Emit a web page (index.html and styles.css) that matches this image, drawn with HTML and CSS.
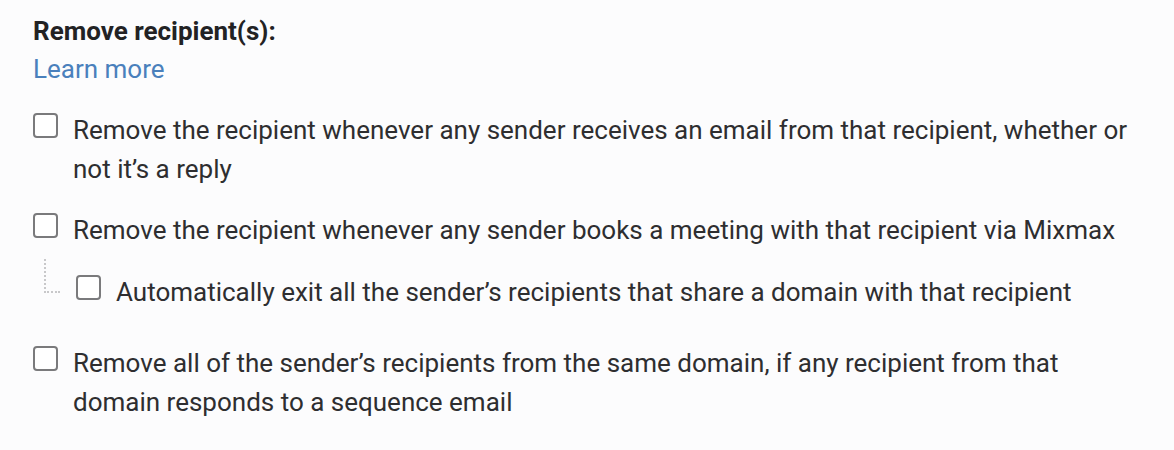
FILE: index.html
```html
<!DOCTYPE html>
<html>
<head>
<meta charset="utf-8">
<link rel="stylesheet" href="styles.css">
</head>
<body>
<div class="panel">
  <div class="title">Remove recipient(s):</div>
  <a class="learn" href="#">Learn more</a>
  <div class="options">
    <label class="opt">
      <span class="box"></span>
      <span class="text">Remove the recipient whenever any sender receives an email from that recipient, whether or not it’s a reply</span>
    </label>
    <div class="group">
      <label class="opt">
        <span class="box"></span>
        <span class="text">Remove the recipient whenever any sender books a meeting with that recipient via Mixmax</span>
      </label>
      <div class="nested">
        <span class="tree"></span>
        <label class="opt">
          <span class="box"></span>
          <span class="text">Automatically exit all the sender’s recipients that share a domain with that recipient</span>
        </label>
      </div>
    </div>
    <label class="opt">
      <span class="box"></span>
      <span class="text">Remove all of the sender’s recipients from the same domain, if any recipient from that domain responds to a sequence email</span>
    </label>
  </div>
</div>
</body>
</html>
```

FILE: styles.css
```css
html, body {
  margin: 0;
  padding: 0;
  background: #fcfcfd;
}
body {
  font-family: Roboto, "Noto Sans", sans-serif;
  color: #2e2e30;
}
.panel {
  padding: 12px 33px 0 33px;
}
.title {
  font-weight: 700;
  font-size: 26px;
  line-height: 38px;
  color: #222224;
}
.learn {
  display: block;
  font-size: 26px;
  line-height: 38px;
  color: #4a80bc;
  text-decoration: none;
}
.options {
  margin-top: 23px;
  display: flex;
  flex-direction: column;
  gap: 22px;
}
.opt {
  display: flex;
  align-items: flex-start;
  gap: 15px;
  font-size: 26px;
  line-height: 39px;
}
.box {
  flex: none;
  width: 21px;
  height: 21px;
  border: 2px solid #7a7a7c;
  border-radius: 4px;
  margin-top: 2px;
  background: #fff;
}
.text {
  flex: 1;
}
.group {
  display: flex;
  flex-direction: column;
  gap: 23px;
  margin-bottom: 10px;
}
.nested {
  display: flex;
  align-items: flex-start;
  padding-left: 11px;
}
.tree {
  flex: none;
  width: 16px;
  height: 34px;
  margin-top: -14px;
  margin-right: 16px;
  border-left: 2px dotted #c8c8ca;
  border-bottom: 2px dotted #c8c8ca;
  box-sizing: border-box;
}
```
